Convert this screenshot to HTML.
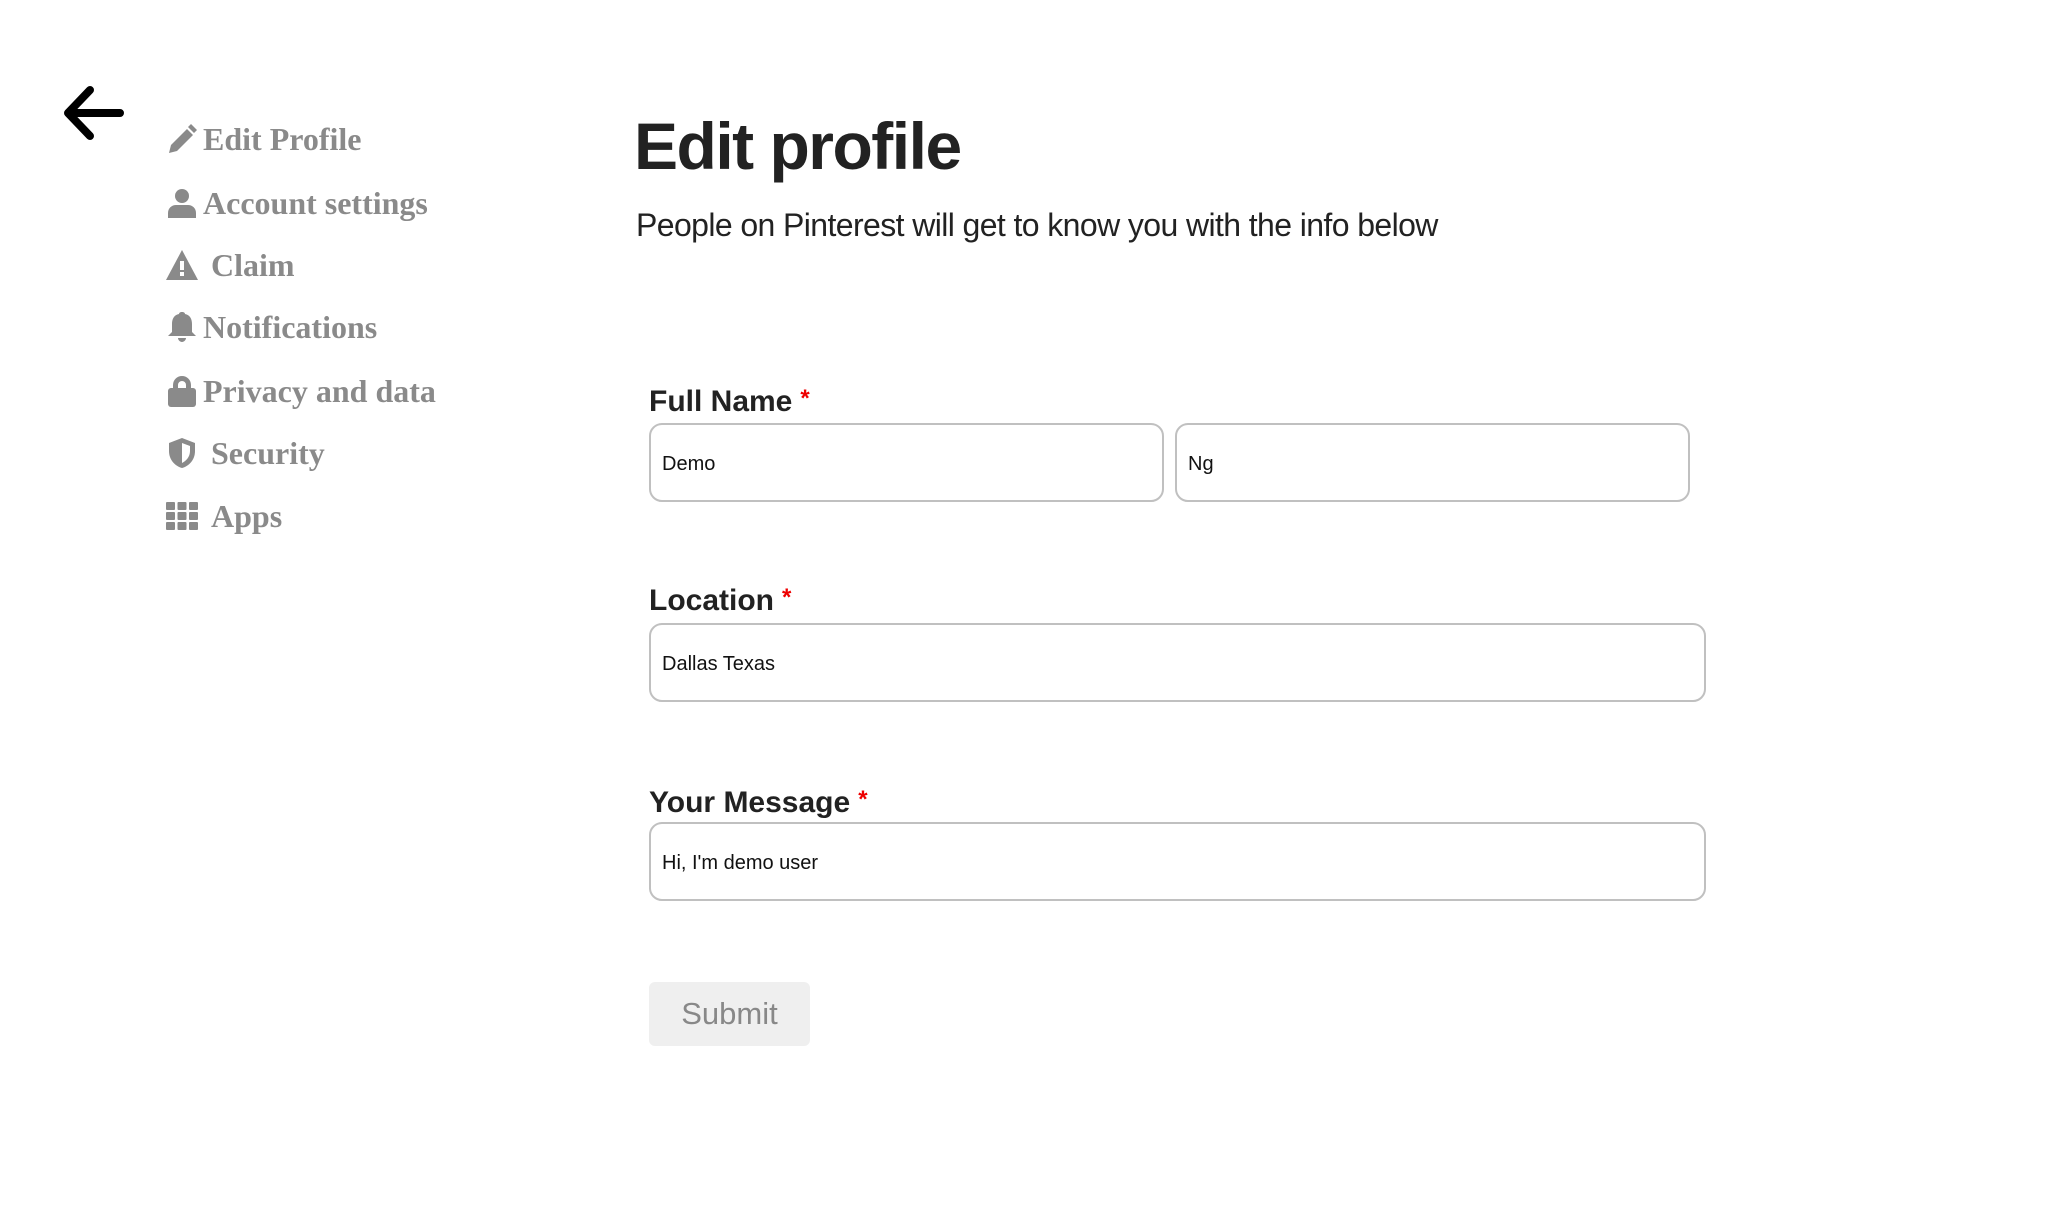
<!DOCTYPE html>
<html><head><meta charset="utf-8"><style>
body{margin:0;width:2058px;height:1216px;background:#fff;position:relative;overflow:hidden;font-family:"Liberation Sans",sans-serif}
.nav{position:absolute;left:166px;color:#8a8a8a;font-family:"Liberation Serif",serif;font-weight:bold;font-size:32px;display:flex;align-items:center;height:40px;white-space:nowrap}
.nav svg{width:32px;height:32px;margin-right:5px;fill:#8a8a8a}
.lbl{position:absolute;left:649px;font-weight:bold;font-size:30px;color:#222}
.lbl span{color:#e00;font-size:24px;vertical-align:top;margin-left:8px}
.in{position:absolute;box-sizing:border-box;border:2px solid #c0c0c0;border-radius:13px;height:79px;font-size:20px;color:#111;padding-left:11px;line-height:78px}
</style></head><body>
<svg style="position:absolute;left:62px;top:84px" width="64" height="58" viewBox="0 0 64 58"><path d="M58 29H7M28 6L6 29l22 23" fill="none" stroke="#000" stroke-width="8" stroke-linecap="round" stroke-linejoin="round"/></svg>

<div class="nav" style="top:119px"><svg viewBox="0 0 32 32"><path d="M3 30l2-8L21 6l6 6L11 28zM22 4l3-3 6 6-3 3z"/></svg>Edit Profile</div>
<div class="nav" style="top:183px"><svg viewBox="0 0 32 32"><circle cx="16" cy="9" r="7"/><path d="M2 31v-5c0-5 4-8 8-8h12c4 0 8 3 8 8v5z"/></svg>Account settings</div>
<div class="nav" style="top:245px"><svg viewBox="0 0 32 32"><path d="M16 1L0 31h32z"/><rect x="14" y="12" width="4" height="9" fill="#fff"/><rect x="14" y="23" width="4" height="4" fill="#fff"/></svg>&nbsp;Claim</div>
<div class="nav" style="top:307px"><svg viewBox="0 0 32 32"><path d="M16 1c-2 0-3 1-3 2-5 1-7 5-7 10v8l-4 4h28l-4-4v-8c0-5-2-9-7-10 0-1-1-2-3-2zM12 27h8c0 2-2 4-4 4s-4-2-4-4z"/></svg>Notifications</div>
<div class="nav" style="top:371px"><svg viewBox="0 0 32 32"><path d="M7 14V10a9 9 0 0118 0v4h-5v-4a4 4 0 00-8 0v4z"/><rect x="2" y="13" width="28" height="19" rx="3"/></svg>Privacy and data</div>
<div class="nav" style="top:433px"><svg viewBox="0 0 32 32"><path d="M16 1L3 6v8c0 9 6 15 13 17 7-2 13-8 13-17V6z"/><path d="M16 6v20c4-2 8-6 8-12V9z" fill="#fff"/></svg>&nbsp;Security</div>
<div class="nav" style="top:496px"><svg viewBox="0 0 32 32"><g><rect x="0" y="2" width="9" height="8" rx="1"/><rect x="11.5" y="2" width="9" height="8" rx="1"/><rect x="23" y="2" width="9" height="8" rx="1"/><rect x="0" y="12" width="9" height="8" rx="1"/><rect x="11.5" y="12" width="9" height="8" rx="1"/><rect x="23" y="12" width="9" height="8" rx="1"/><rect x="0" y="22" width="9" height="8" rx="1"/><rect x="11.5" y="22" width="9" height="8" rx="1"/><rect x="23" y="22" width="9" height="8" rx="1"/></g></svg>&nbsp;Apps</div>

<div style="position:absolute;left:634px;top:108px;font-size:66px;font-weight:bold;color:#222;letter-spacing:-1.5px">Edit profile</div>
<div style="position:absolute;left:636px;top:207px;font-size:32px;color:#222;letter-spacing:-0.6px">People on Pinterest will get to know you with the info below</div>

<div class="lbl" style="top:385px">Full Name<span>*</span></div>
<div class="in" style="left:649px;top:423px;width:515px">Demo</div>
<div class="in" style="left:1175px;top:423px;width:515px">Ng</div>

<div class="lbl" style="top:584px">Location<span>*</span></div>
<div class="in" style="left:649px;top:623px;width:1057px">Dallas Texas</div>

<div class="lbl" style="top:786px">Your Message<span>*</span></div>
<div class="in" style="left:649px;top:822px;width:1057px">Hi, I'm demo user</div>

<div style="position:absolute;left:649px;top:982px;width:161px;height:64px;background:#efefef;border-radius:6px;color:#888;font-size:31px;text-align:center;line-height:64px">Submit</div>
</body></html>
